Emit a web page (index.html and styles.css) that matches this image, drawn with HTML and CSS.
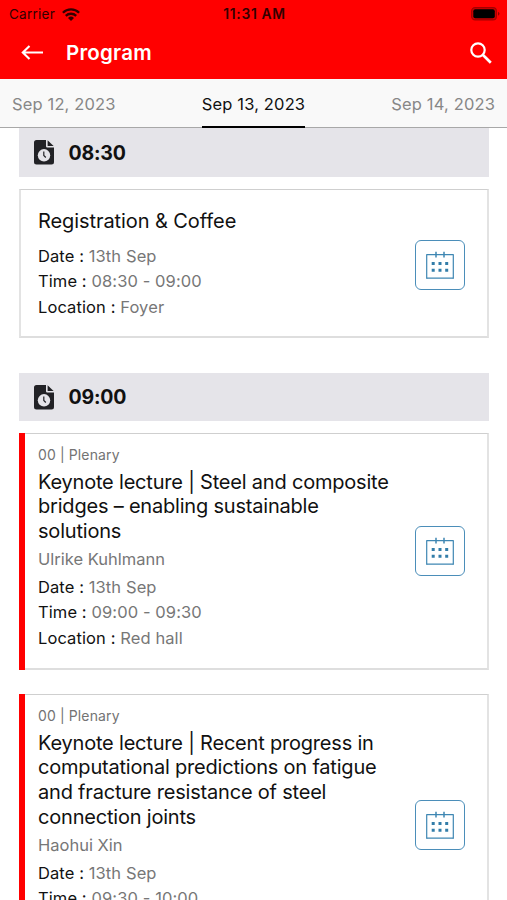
FILE: index.html
```html
<!DOCTYPE html>
<html lang="en">
<head>
<meta charset="utf-8">
<meta name="viewport" content="width=device-width, initial-scale=1">
<title>Program</title>
<link rel="stylesheet" href="styles.css">
</head>
<body>
<svg class="sprite" aria-hidden="true">
  <symbol id="file-clock" viewBox="0 0 20 25">
    <path fill="#222226" d="M2.500 0H12v6.200a1.300 1.300 0 0 0 1.300 1.300H20v14.500a2.500 2.500 0 0 1-2.500 2.500h-15A2.500 2.500 0 0 1 0 22V2.500A2.500 2.500 0 0 1 2.500 0z"/>
    <path fill="#222226" d="M13.600.2 19.600 6.100h-6z"/>
    <circle cx="10" cy="15.300" r="6.200" fill="#e5e4e9"/>
    <path d="M9.800 11.500v4l2 2" fill="none" stroke="#222226" stroke-width="1.200"/>
  </symbol>
  <symbol id="calendar" viewBox="0 0 28 28">
    <path d="M.7 3.700h26.600M.7 27.200h26.600" fill="none" stroke="#3f87b3" stroke-width="1.300"/>
    <path d="M.7 3.200v24.500M27.300 3.200v24.500" fill="none" stroke="#3f87b3" stroke-width="1.200"/>
    <path d="M10 .8v5.800M18 .8v5.800" fill="none" stroke="#3f87b3" stroke-width="1.500"/>
    <path fill="#327da9" d="M5.700 11h3v3h-3zM12.500 11h3v3h-3zM19.200 11h3v3h-3zM5.700 17.700h3v3h-3zM12.500 17.700h3v3h-3zM19.200 17.700h3v3h-3z"/>
  </symbol>
</svg>
<header class="header">
  <div class="status">
    <div class="status-left">
      <span class="carrier">Carrier</span>
      <svg class="wifi" viewBox="0 0 18 13"><g fill="none" stroke="#300" stroke-width="2.300"><path d="M.9 4.700a11.500 11.500 0 0 1 16.200 0"/><path d="M3.800 7.900a7.400 7.400 0 0 1 10.400 0"/></g><path fill="#300" d="M6 10a4.300 4.300 0 0 1 6 0l-3 3z"/></svg>
    </div>
    <span class="clock">11:31 AM</span>
    <svg class="battery" viewBox="0 0 29 14"><rect x=".6" y=".6" width="24.800" height="12.300" rx="3.500" fill="#d00000" stroke="#a30000" stroke-width="1.100"/><rect x="2.300" y="2.300" width="21.500" height="9" rx="2" fill="#000"/><path fill="#900000" d="M27 4.700q3 2 0 4z"/></svg>
  </div>
  <div class="nav">
    <svg class="back" viewBox="0 0 24 16"><path d="M22 7.500H2.200M8.500 1 1.800 7.500l6.700 6.500" fill="none" stroke="#fff" stroke-width="2.100"/></svg>
    <h1 class="nav-title">Program</h1>
    <svg class="search" viewBox="0 0 22 22"><circle cx="8" cy="8" r="6.700" fill="none" stroke="#fff" stroke-width="2.200"/><path d="m13 13 7.800 7.800" stroke="#fff" stroke-width="2.700"/></svg>
  </div>
</header>
<nav class="tabs">
  <a class="tab">Sep 12, 2023</a>
  <a class="tab active">Sep 13, 2023</a>
  <a class="tab">Sep 14, 2023</a>
</nav>
<main class="list">
  <section class="slot">
    <h2 class="slot-head"><svg class="slot-icon"><use href="#file-clock"/></svg>08:30</h2>
    <article class="card plain">
      <div class="info">
        <h3 class="title">Registration &amp; Coffee</h3>
        <p class="row">Date : <span class="value">13th Sep</span></p>
        <p class="row">Time : <span class="value">08:30 - 09:00</span></p>
        <p class="row">Location : <span class="value">Foyer</span></p>
      </div>
      <div class="add"><svg class="add-icon"><use href="#calendar"/></svg></div>
    </article>
  </section>
  <section class="slot">
    <h2 class="slot-head"><svg class="slot-icon"><use href="#file-clock"/></svg>09:00</h2>
    <article class="card session">
      <div class="info">
        <p class="track">00 | Plenary</p>
        <h3 class="title">Keynote lecture | Steel and composite<br>bridges – enabling sustainable<br>solutions</h3>
        <p class="speaker">Ulrike Kuhlmann</p>
        <p class="row">Date : <span class="value">13th Sep</span></p>
        <p class="row">Time : <span class="value">09:00 - 09:30</span></p>
        <p class="row">Location : <span class="value">Red hall</span></p>
      </div>
      <div class="add"><svg class="add-icon"><use href="#calendar"/></svg></div>
    </article>
    <article class="card session">
      <div class="info">
        <p class="track">00 | Plenary</p>
        <h3 class="title">Keynote lecture | Recent progress in<br>computational predictions on fatigue<br>and fracture resistance of steel<br>connection joints</h3>
        <p class="speaker">Haohui Xin</p>
        <p class="row">Date : <span class="value">13th Sep</span></p>
        <p class="row">Time : <span class="value">09:30 - 10:00</span></p>
        <p class="row">Location : <span class="value">Red hall</span></p>
      </div>
      <div class="add"><svg class="add-icon"><use href="#calendar"/></svg></div>
    </article>
  </section>
</main>
</body>
</html>
```
FILE: styles.css
```css
* { box-sizing: border-box; margin: 0; padding: 0; }
body {
  height: 900px;
  overflow: hidden;
  display: flex;
  flex-direction: column;
  background: #fff;
  color: #111;
  font-family: Inter, "Liberation Sans", sans-serif;
}
svg { display: block; flex: none; }
.sprite { width: 0; height: 0; position: absolute; }
.header { flex: none; height: 79px; background: #f00; }
.status {
  height: 27px;
  padding: 0 7px 0 9px;
  display: grid;
  grid-template-columns: 1fr auto 1fr;
  align-items: center;
  color: #300;
  font-size: 13.500px;
  line-height: 28px;
}
.status-left { display: flex; align-items: center; gap: 7px; }
.carrier { letter-spacing: 0.25px; }
.wifi { width: 18px; height: 13px; }
.clock { font-size: 13.800px; font-weight: 600; letter-spacing: 0.7px; }
.battery { width: 29px; height: 14px; justify-self: end; }
.nav { height: 52px; display: flex; align-items: center; padding: 0 15px 0 21px; color: #fff; }
.back { width: 24px; height: 16px; }
.nav-title { flex: 1; margin-left: 21px; font-size: 20.500px; font-weight: 600; letter-spacing: 0.2px; line-height: 52px; }
.search { width: 22px; height: 22px; }
.tabs {
  flex: none;
  height: 49px;
  display: flex;
  justify-content: space-between;
  padding: 0 12px;
  background: #f9f9f9;
  border-bottom: 1px solid #a8a8a8;
}
.tab { height: 49px; line-height: 50px; font-size: 16.500px; letter-spacing: 0.15px; color: #878787; border-bottom: 2px solid transparent; }
.tab.active { color: #111; border-bottom-color: #000; }
.list { flex: 1; min-height: 0; overflow: hidden; padding: 0 18px 0 19px; }
.slot { margin-bottom: 35px; }
.slot-head {
  height: 48px;
  margin-bottom: 12px;
  padding-left: 15px;
  display: flex;
  align-items: center;
  gap: 14.500px;
  background: #e5e4e9;
  font-size: 19.500px;
  font-weight: 700;
  letter-spacing: -0.2px;
}
.slot:first-child .slot-head { height: 49px; }
.slot-icon { width: 20px; height: 25px; }
.card {
  position: relative;
  display: flex;
  align-items: center;
  justify-content: space-between;
  border: 2px solid #e3e3e3;
  border-top: 1px solid #cfcfcf;
  border-bottom-color: #dedede;
}
.card.plain { height: 149px; padding: 3px 22px 0 17px; }
.card.session { padding: 9.500px 22px 16.500px 17px; margin-bottom: 24px; }
.card.session::before {
  content: "";
  position: absolute;
  top: -1px;
  bottom: -2px;
  left: -2px;
  width: 6px;
  background: #f00;
}
.card.session .add { position: relative; top: 3.600px; }
.info { white-space: nowrap; }
.title { font-size: 20px; font-weight: 400; line-height: 24.800px; letter-spacing: -0.2px; }
.plain .title { margin-bottom: 10px; letter-spacing: -0.08px; }
.track { font-size: 14px; line-height: 22px; margin-bottom: 4px; letter-spacing: 0.12px; color: #737373; }
.speaker { font-size: 16.500px; line-height: 25px; margin: 3px 0; color: #777; }
.row { font-size: 16.500px; line-height: 25.600px; letter-spacing: 0.1px; }
.value { color: #777; }
.add {
  width: 50px;
  height: 50px;
  flex: none;
  display: flex;
  align-items: center;
  justify-content: center;
  border: 1.500px solid #4b8eb9;
  border-radius: 6px;
}
.add-icon { width: 28px; height: 28px; }
```
